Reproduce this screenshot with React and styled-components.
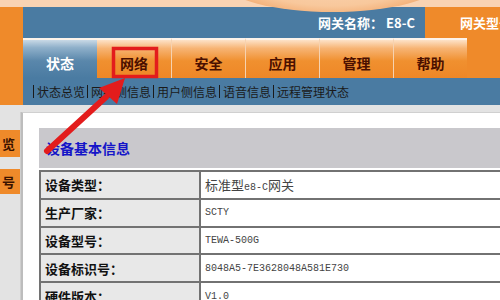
import React from "react";
import styled, { createGlobalStyle } from "styled-components";

const Global = createGlobalStyle`
  html, body { margin: 0; padding: 0; }
  body {
    width: 500px; height: 300px; overflow: hidden; background: #ffffff;
    font-family: "Noto Sans CJK SC", "DejaVu Sans", sans-serif;
  }
`;

const ORANGE = "#ef8a2a";
const BLUE = "#4a7ba2";

const Page = styled.div`
  position: relative;
  width: 500px;
  height: 300px;
  overflow: hidden;
  display: flex;
  flex-direction: column;
`;

const TopStrip = styled.div`
  height: 7px;
  background: #f9d3b3;
  flex: none;
`;

const Swoosh = styled.div`
  position: absolute;
  left: 225px;
  top: -46px;
  width: 215px;
  height: 58px;
  border-radius: 50%;
  background: radial-gradient(ellipse at 50% 30%, #fad9bd 0%, #f8c89c 60%, #f0a060 88%, #e98a3c 100%);
  z-index: 2;
`;

const Header = styled.div`
  display: grid;
  grid-template-columns: 23px 1fr;
  flex: none;
`;

const LeftRail = styled.div`
  background: ${ORANGE};
`;

const HeaderMain = styled.div`
  display: flex;
  flex-direction: column;
`;

const InfoBar = styled.div`
  height: 31px;
  display: flex;
`;

const InfoBlue = styled.div`
  flex: 1;
  background: ${BLUE};
  display: flex;
  align-items: center;
  justify-content: flex-end;
  padding-right: 10px;
  color: #fff;
  font-weight: 700;
  font-size: 13px;
`;

const InfoOrange = styled.div`
  width: 75px;
  background: ${ORANGE};
  display: flex;
  align-items: center;
  padding-left: 35px;
  box-sizing: border-box;
  color: #fff;
  font-weight: 700;
  font-size: 13px;
  white-space: nowrap;
  overflow: hidden;
`;

const TabRow = styled.div`
  height: 40px;
  display: flex;
`;

const Tab = styled.div`
  width: 74px;
  box-sizing: border-box;
  display: flex;
  align-items: flex-end;
  justify-content: center;
  padding-bottom: 5px;
  font-size: 14px;
  font-weight: 700;
  border-top: 2px solid #fdf3ea;
  border-left: ${(p) => (p.$first ? "none" : "1px solid #f6d2b0")};
  color: ${(p) => (p.$active ? "#ffffff" : "#4a0f00")};
  background: ${(p) =>
    p.$active
      ? "linear-gradient(#c9d9e6 0%, #8fb0ca 20%, #5a87ab 55%, #4a7ba2 100%)"
      : "linear-gradient(#fde2c8 0%, #f7b474 22%, #f0902f 55%, #ee8727 100%)"};
`;

const TabFill = styled.div`
  flex: 1;
  background: ${ORANGE};
`;

const SubNav = styled.div`
  height: 27px;
  background: ${BLUE};
  display: flex;
  align-items: center;
  padding-left: 10px;
  font-size: 12px;
  color: #1a1a1a;
  white-space: nowrap;
`;

const SubItem = styled.span`
  border-left: 1px solid #1a1a1a;
  padding: 0 2px 0 3px;
  line-height: 13px;
`;

const Body = styled.div`
  flex: 1;
  display: grid;
  grid-template-columns: 21px 1fr;
  background: #e3e3e3;
  padding-top: 7px;
`;

const Sidebar = styled.div`
  display: flex;
  flex-direction: column;
  gap: 12px;
  padding-top: 18px;
  border-right: 1px solid #cfcfcf;
`;

const SideBtn = styled.div`
  height: ${(p) => p.$h}px;
  background: ${ORANGE};
  display: flex;
  align-items: center;
  justify-content: flex-end;
  padding-right: 5px;
  font-size: 13px;
  font-weight: 700;
  color: #3a1200;
`;

const Panel = styled.div`
  background: #ffffff;
  border-left: 2px solid #bdbdbd;
  border-top: 1px solid #d0d0d0;
  padding: 15px 0 0 16px;
  overflow: hidden;
`;

const SectionHead = styled.div`
  width: 600px;
  height: 40px;
  background: #c9c8cc;
  display: flex;
  align-items: center;
  padding-left: 7px;
  box-sizing: border-box;
  color: #1515c8;
  font-weight: 700;
  font-size: 14px;
  margin-bottom: 2px;
`;

const Table = styled.table`
  width: 600px;
  border-collapse: collapse;
`;

const Cell = styled.td`
  height: 27.8px;
  padding: 0 0 0 4px;
  border: 2px solid #727272;
  box-sizing: border-box;
  background: ${(p) => (p.$label ? "#e8e8e8" : "#ffffff")};
  width: ${(p) => (p.$label ? "160px" : "auto")};
  font-size: ${(p) => (p.$label ? "13px" : "10px")};
  font-weight: ${(p) => (p.$label ? 700 : 400)};
  color: ${(p) => (p.$label ? "#111" : "#444")};
  font-family: ${(p) =>
    p.$label
      ? '"Noto Sans CJK SC", sans-serif'
      : '"Liberation Mono", "Noto Sans CJK SC", monospace'};
  white-space: nowrap;
`;

const Cjk = styled.span`
  font-family: "Noto Sans CJK SC", sans-serif;
  font-size: 13px;
`;

const Overlay = styled.svg`
  position: absolute;
  left: 0;
  top: 0;
  width: 500px;
  height: 300px;
  pointer-events: none;
  z-index: 5;
`;

const tabs = ["状态", "网络", "安全", "应用", "管理", "帮助"];
const subs = ["状态总览", "网络侧信息", "用户侧信息", "语音信息", "远程管理状态"];

export default function App() {
  return (
    <Page>
      <Global />
      <TopStrip />
      <Swoosh />
      <Header>
        <LeftRail />
        <HeaderMain>
          <InfoBar>
            <InfoBlue>网关名称： E8-C</InfoBlue>
            <InfoOrange>网关型号</InfoOrange>
          </InfoBar>
          <TabRow>
            {tabs.map((t, i) => (
              <Tab key={t} $active={i === 0} $first={i === 0 || i === 1}>
                {t}
              </Tab>
            ))}
            <TabFill />
          </TabRow>
          <SubNav>
            {subs.map((s) => (
              <SubItem key={s}>{s}</SubItem>
            ))}
          </SubNav>
        </HeaderMain>
      </Header>
      <Body>
        <Sidebar>
          <SideBtn $h={27}>览</SideBtn>
          <SideBtn $h={25}>号</SideBtn>
        </Sidebar>
        <Panel>
          <SectionHead>设备基本信息</SectionHead>
          <Table>
            <tbody>
              <tr>
                <Cell $label>设备类型：</Cell>
                <Cell>
                  <Cjk>标准型</Cjk>e8-C<Cjk>网关</Cjk>
                </Cell>
              </tr>
              <tr>
                <Cell $label>生产厂家：</Cell>
                <Cell>SCTY</Cell>
              </tr>
              <tr>
                <Cell $label>设备型号：</Cell>
                <Cell>TEWA-500G</Cell>
              </tr>
              <tr>
                <Cell $label>设备标识号：</Cell>
                <Cell>8048A5-7E3628048A581E730</Cell>
              </tr>
              <tr>
                <Cell $label>硬件版本：</Cell>
                <Cell>V1.0</Cell>
              </tr>
            </tbody>
          </Table>
        </Panel>
      </Body>
      <Overlay viewBox="0 0 500 300">
        <rect x="113.5" y="48.5" width="43" height="28" fill="none" stroke="#e31c1c" strokeWidth="3.5" />
        <line x1="47" y1="151" x2="106" y2="97" stroke="#e31c1c" strokeWidth="6" strokeLinecap="round" />
        <polygon points="125,78 117,104 99,88" fill="#e31c1c" />
      </Overlay>
    </Page>
  );
}
